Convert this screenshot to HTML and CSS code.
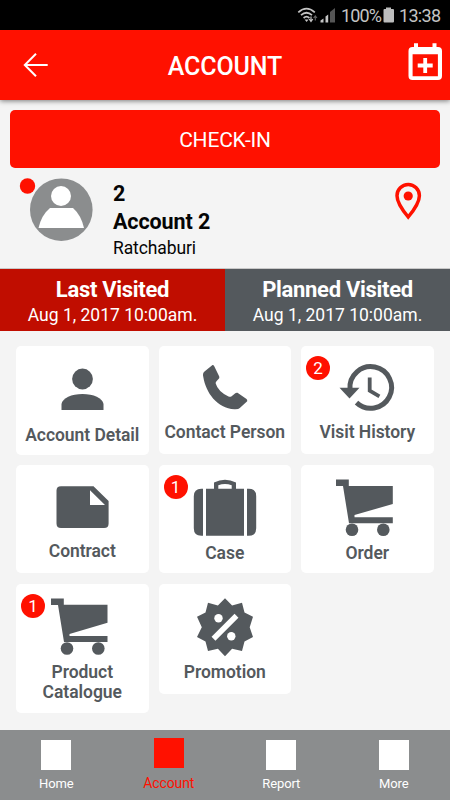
FILE: index.html
```
<!DOCTYPE html>
<html lang="en">
<head>
<meta charset="utf-8">
<title>Account</title>
<link rel="stylesheet" href="styles.css">
</head>
<body>
<div class="status">
  <svg class="signals" width="40" height="30" viewBox="296 0 40 30">
    <g fill="none" stroke="#c4c4c4" stroke-width="1.7">
      <path d="M298.3 12.3Q306.5 4.8 314.8 12.3"/><path d="M301 15.2Q306.5 10.3 312 15.2"/><path d="M303.6 18Q306.5 15.4 309.4 18"/>
    </g>
    <path d="M304.6 19.5h4l-2 2.5z" fill="#c4c4c4"/>
    <path d="M311 16.5v4M309.2 19l1.8 2.5 1.8-2.5" fill="none" stroke="#c4c4c4" stroke-width="1.2"/>
    <path d="M315.3 20.5v-4M313.6 18l1.7-2.2 1.7 2.2" fill="none" stroke="#666" stroke-width="1.1"/>
    <path d="M320.5 22.5v-2l3-2v4zM325.5 22.5v-6l2.7-2v8z" fill="#c4c4c4"/><path d="M330 22.5V12l5-4v14.5z" fill="#555"/>
  </svg>
  <span class="percent">100%</span>
  <svg class="battery" width="12" height="30" viewBox="383 0 12 30"><path d="M386 9V7.500h5V9h2q1 0 1 1v11.500q0 1-1 1h-8.500q-1 0-1-1V10q0-1 1-1z" fill="#bdbdbd"/></svg>
  <span class="clock">13:38</span>
</div>
<header class="bar">
  <svg width="60" height="70" viewBox="0 30 60 70"><path d="M47.700 65H25M36 53.800L24.800 65 36 76.200" fill="none" stroke="#fff" stroke-width="2"/></svg>
  <h1>ACCOUNT</h1>
  <svg width="60" height="70" viewBox="390 30 60 70"><path fill="#fff" fill-rule="evenodd" d="M414 43.300h4V47h14.500v-3.700h4V47h1.500q4 0 4 4v25q0 4-4 4h-25.500q-4 0-4-4V51q0-4 4-4h1.500zM412.600 54.300v22h25.300v-22z"/><path d="M425.200 58v15M417.700 65.500h15" stroke="#fff" stroke-width="3.800"/></svg>
</header>
<main>
  <button class="checkin">CHECK-IN</button>
  <section class="profile">
    <svg width="113" height="88" viewBox="0 180 113 88">
      <circle cx="61.300" cy="209.700" r="31.300" fill="#8b8d8e"/>
      <circle cx="61" cy="196" r="10" fill="#fff"/><path d="M50 208h23q8 7 11 20H38.500Q41.500 215 50 208z" fill="#fff"/>
      <circle cx="27.500" cy="186" r="7.700" fill="#ff1100"/>
    </svg>
    <div class="who"><b>2</b><b>Account 2</b><span>Ratchaburi</span></div>
    <svg class="pin" width="60" height="88" viewBox="390 180 60 88"><path d="M408.200 217Q397 203.500 397 195.700a11.200 11.200 0 0 1 22.400 0Q419.400 203.500 408.200 217z" fill="none" stroke="#ff1100" stroke-width="3.500"/><circle cx="408.200" cy="196" r="4.600" fill="#ff1100"/></svg>
  </section>
  <section class="visits">
    <div class="last"><b>Last Visited</b><span>Aug 1, 2017 10:00am.</span></div>
    <div class="planned"><b>Planned Visited</b><span>Aug 1, 2017 10:00am.</span></div>
  </section>
  <section class="grid">
    <a class="card detail">
      <svg viewBox="16 346 133 74"><circle cx="82.500" cy="379" r="10.400"/><path d="M61.500 410v-6c1-6 10-10 21-10s20 4 21 10v6z"/></svg>
      <span>Account Detail</span></a>
    <a class="card contact">
      <svg viewBox="159 346 133 74"><path d="M212.500 365L204.500 371.500Q202.300 373 203.300 377C206 393 217 408 234.500 409.300Q238.500 409.500 239.800 408L247.200 401.300Q247.500 400 246.500 399L237.500 392.800Q236 392.500 235 393.500L231.300 396.500Q230 397 228.500 396.500Q218 391.500 215.700 383.500Q215.500 382 216.500 381.300L219.200 378.300Q219.600 377 219 376L214 365.800Q213.500 364.800 212.500 365z"/></svg>
      <span>Contact Person</span></a>
    <a class="card history"><i class="badge">2</i>
      <svg viewBox="301 346 133 74"><path d="M350 389A20.800 20.800 0 1 1 356.500 402.600" fill="none" stroke="#54595d" stroke-width="5"/><path d="M339.500 387.700h20L349.500 398.500z"/><path d="M369.700 377.500v13.200l9.700 5.600" fill="none" stroke="#54595d" stroke-width="3.800"/></svg>
      <span>Visit History</span></a>
    <a class="card contract">
      <svg viewBox="16 465 133 74"><path fill-rule="evenodd" d="M61 486.200h32.500L108.600 501v22.500q0 4.500-4.500 4.500H61q-4.500 0-4.500-4.500v-33q0-4.300 4.500-4.300zM90 490.200v14.800h15z"/></svg>
      <span>Contract</span></a>
    <a class="card case"><i class="badge">1</i>
      <svg viewBox="159 465 133 74"><path d="M206 488.700h38v47.100h-38zM203 488.700v47.100h-1.700q-7.500 0-7.500-7.500v-32.100q0-7.500 7.500-7.500zM247 488.700v47.100h1.700q7.500 0 7.500-7.500v-32.100q0-7.500-7.500-7.500z"/><path fill-rule="evenodd" d="M214 489v-6.500Q225 477 236 482.500v6.500zM218.300 489h13.400v-3.800q-6.700-2.400-13.400 0z"/></svg>
      <span>Case</span></a>
    <a class="card order">
      <svg viewBox="301 465 133 74"><path d="M336 479.500h12.800v6.500h44v18L354.500 515v2.200h38.300v6H349L343 486h-7z"/><circle cx="352" cy="529.700" r="6.300"/><circle cx="383.300" cy="529.700" r="6.300"/></svg>
      <span>Order</span></a>
    <a class="card product"><i class="badge">1</i>
      <svg viewBox="16 584 133 74"><path d="M51 598.500h12.800v6.200h43.700v18L69.500 634v2h38v6H64L58 605h-7z"/><circle cx="67" cy="648.500" r="6.300"/><circle cx="98.300" cy="648.500" r="6.300"/></svg>
      <span>Product<br>Catalogue</span></a>
    <a class="card promotion">
      <svg viewBox="159 584 133 74"><path d="M225 598.200l7.100 7.200 9.900-2.700 2.500 9.800 8.500 4.300-3.300 10.500 3.300 9.700-8.500 4.500-2.500 9.500-9.900-2.300-7.100 7.500-7.100-7.500-9.900 2.300-2.500-9.500-8.500-4.500 4.800-9.700-4.800-10.500 8.500-4.300 2.500-9.800 9.900 2.700z"/><g fill="#fff"><circle cx="218.500" cy="618.300" r="4.200"/><circle cx="231.300" cy="636.200" r="4.200"/></g><path d="M213.500 638.800L236.500 615.800" stroke="#fff" stroke-width="5.500"/></svg>
      <span>Promotion</span></a>
  </section>
</main>
<nav class="tabs">
  <a><i></i>Home</a><a class="on"><i></i>Account</a><a><i></i>Report</a><a><i></i>More</a>
</nav>
</body>
</html>
```
FILE: styles.css
```
* { box-sizing: border-box; }
body { margin: 0; width: 450px; height: 800px; overflow: hidden; display: flex; flex-direction: column; background: #f4f4f4; font-family: Roboto, "Liberation Sans", sans-serif; }
svg { display: block; flex: none; overflow: visible; }
.status { height: 30px; flex: none; background: #000; color: #c4c4c4; display: flex; padding-left: 296px; font-size: 18px; line-height: 31px; white-space: nowrap; }
.percent { width: 47px; padding-left: 5px; letter-spacing: -0.900px; }
.clock { padding-left: 4px; letter-spacing: -0.700px; }
.bar { height: 70px; flex: none; display: flex; justify-content: space-between; background: #ff1100; color: #fff; box-shadow: 0 1px 5px rgba(0,0,0,.5); z-index: 1; }
.bar h1 { margin: 0; font-size: 25px; font-weight: 500; line-height: 73px; letter-spacing: -0.100px; }
main { flex: 1; display: flex; flex-direction: column; padding-top: 10px; }
.checkin { margin: 0 10px; height: 58px; border: 0; border-radius: 5px; background: #ff1100; color: #fff; font: 400 21px/58px Roboto, sans-serif; letter-spacing: -0.200px; padding: 1px 0 0; }
.profile { height: 100px; padding-top: 12px; display: flex; }
.who { flex: 1; display: flex; flex-direction: column; color: #050505; }
.who b { font-size: 21.500px; font-weight: 700; line-height: 28px; letter-spacing: -0.100px; }
.who span { font-size: 17.500px; line-height: 24px; letter-spacing: -0.100px; }
.visits { height: 63px; display: flex; color: #fff; text-align: center; border-top: 1px solid #c8c8c8; }
.visits div { flex: 1; display: flex; flex-direction: column; padding-top: 6px; }
.visits b { font-size: 22px; line-height: 29px; letter-spacing: -0.300px; }
.visits span { font-size: 17.500px; line-height: 23px; }
.last { background: #c00d00; }
.planned { background: #54595d; }
.grid { display: grid; grid-template-columns: repeat(3, 132.500px); column-gap: 10px; grid-template-rows: 119.500px 119px 130px; padding: 14.500px 0 0 16px; align-items: start; }
.card { position: relative; height: 108px; border-radius: 5px; background: #fff; color: #54595d; text-align: center; font-size: 17.500px; font-weight: 600; line-height: 20px; letter-spacing: -0.050px; white-space: nowrap; }
.card svg { width: 133px; height: 74px; fill: #54595d; }
.card span { display: block; padding-top: 2.500px; }
.detail { height: 109.500px; }
.detail span { padding-top: 5px; }
.contact span, .contract span { padding-top: 2px; }
.case span, .order span { padding-top: 4px; }
.product span, .promotion span { padding-top: 4px; }
.product { height: 129px; }
.promotion { height: 110px; }
.badge { position: absolute; left: 5px; top: 10px; width: 24px; height: 24px; border-radius: 50%; background: #ff1100; color: #fff; font: 400 17px/25px Roboto, sans-serif; }
.tabs { height: 70px; flex: none; display: flex; background: #8b8d8e; color: #fff; font-size: 13px; line-height: 16px; letter-spacing: -0.100px; }
.tabs a { flex: 1; display: flex; flex-direction: column; align-items: center; padding-top: 10px; gap: 6px; }
.tabs i { width: 30px; height: 30px; background: #fff; }
.tabs .on { padding-top: 8px; gap: 7px; color: #ff1100; font-size: 14px; }
.tabs .on i { background: #ff1100; }
```
